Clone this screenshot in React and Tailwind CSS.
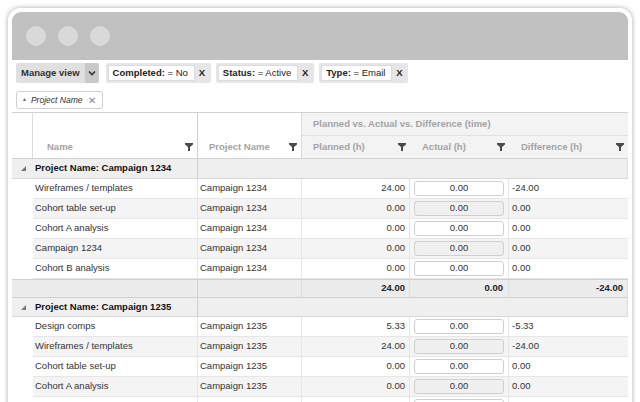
import React from "react";

const COLS = "grid grid-cols-[21px_165px_104px_108px_99px_119px]";

function Funnel() {
  return (
    <svg width="8" height="8" viewBox="0 0 8 8" className="shrink-0">
      <polygon points="0,0 8,0 8,1.6 5,4 5,8 3,8 3,4 0,1.6" fill="#4a4a4a" />
    </svg>
  );
}

function Toggle() {
  return (
    <svg width="5" height="5" viewBox="0 0 5 5">
      <polygon points="5,0 5,5 0,5" fill="#777" />
    </svg>
  );
}

function Chip({ label, value }) {
  return (
    <div className="flex h-[20px] rounded-[2px] bg-[#e6e6e6] p-[2px]">
      <div className="flex items-center border border-[#dcdcdc] bg-white pl-[4px] pr-[6px] text-[#222]">
        <span className="font-bold">{label}</span>
        <span>&nbsp;= {value}</span>
      </div>
      <div className="flex w-[14px] items-center justify-center font-bold text-[#222]">X</div>
    </div>
  );
}

const group1 = [
  ["Wireframes / templates", "Campaign 1234", "24.00", "-24.00"],
  ["Cohort table set-up", "Campaign 1234", "0.00", "0.00"],
  ["Cohort A analysis", "Campaign 1234", "0.00", "0.00"],
  ["Campaign 1234", "Campaign 1234", "0.00", "0.00"],
  ["Cohort B analysis", "Campaign 1234", "0.00", "0.00"],
];
const group2 = [
  ["Design comps", "Campaign 1235", "5.33", "-5.33"],
  ["Wireframes / templates", "Campaign 1235", "24.00", "-24.00"],
  ["Cohort table set-up", "Campaign 1235", "0.00", "0.00"],
  ["Cohort A analysis", "Campaign 1235", "0.00", "0.00"],
  ["Campaign 1235", "Campaign 1235", "0.00", "0.00"],
];

function DataRow({ row, i }) {
  const odd = i % 2 === 1;
  const bg = odd ? "bg-[#f4f4f4]" : "bg-white";
  const cell = `${bg} border-b border-[#e6e6e6] flex items-center`;
  return (
    <div className={`${COLS} h-[20px]`}>
      <div className="bg-white" />
      <div className={`${cell} border-r border-[#cfcfcf] pl-[2px]`}>{row[0]}</div>
      <div className={`${cell} border-r border-[#dcdcdc] pl-[2px]`}>{row[1]}</div>
      <div className={`${cell} border-r border-[#e4e4e4] justify-end pr-[4px]`}>{row[2]}</div>
      <div className={`${cell} border-r border-[#e4e4e4] px-[4px]`}>
        <div
          className={`flex h-[15px] w-full items-center justify-center rounded-[3px] border border-[#cfcfcf] ${
            odd ? "bg-[#f0f0f0]" : "bg-white"
          }`}
        >
          0.00
        </div>
      </div>
      <div className={`${cell} pl-[3px]`}>{row[3]}</div>
    </div>
  );
}

function GroupRow({ name, h }) {
  return (
    <div className={`${COLS} ${h} bg-[#efefef] border-b border-[#d8d8d8]`}>
      <div className="flex items-center justify-center pl-[1px]">
        <Toggle />
      </div>
      <div className="flex items-center border-r border-[#cfcfcf] pl-[2px] font-bold text-[#111]">
        Project Name: {name}
      </div>
      <div className="col-span-4" />
    </div>
  );
}

export default function App() {
  return (
    <div
      className="h-[402px] w-[640px] overflow-hidden bg-white px-2 pt-2 text-[9.5px] text-[#333]"
      style={{ fontFamily: '"Liberation Sans", Arial, Helvetica, sans-serif' }}
    >
      <div className="h-[420px] rounded-t-[12px] bg-white p-1 shadow-[0_0_5px_rgba(0,0,0,0.35)]">
        <div className="flex h-[48px] items-center gap-[12px] rounded-t-[9px] bg-[#c1c1c1] pl-[14px]">
          <div className="h-5 w-5 rounded-full bg-[#d9d9d9]" />
          <div className="h-5 w-5 rounded-full bg-[#d9d9d9]" />
          <div className="h-5 w-5 rounded-full bg-[#d9d9d9]" />
        </div>

        <div className="mt-[3px] flex gap-[5px] px-1">
          <div className="mr-[2px] flex h-[20px] overflow-hidden rounded-[2px] bg-[#e0e0e0]">
            <div className="flex items-center px-[5px] font-bold text-[#333]">Manage view</div>
            <div className="flex w-[14px] items-center justify-center bg-[#c9c9c9]">
              <svg width="8" height="6" viewBox="0 0 8 6">
                <polyline points="1,1.5 4,4.5 7,1.5" fill="none" stroke="#333" strokeWidth="1.6" />
              </svg>
            </div>
          </div>
          <Chip label="Completed:" value="No" />
          <Chip label="Status:" value="Active" />
          <Chip label="Type:" value="Email" />
        </div>

        <div className="mt-[8px] flex px-1">
          <div className="flex h-[18px] w-[87px] items-center gap-[4px] rounded-[3px] border border-[#cfcfcf] bg-white pl-[5px] text-[8.5px] italic text-[#333]">
            <span className="text-[5px] not-italic text-[#666]">▲</span>
            <span>Project Name</span>
            <span className="ml-[2px] text-[10px] not-italic text-[#888]">✕</span>
          </div>
        </div>

        <div className="mt-[3px] border-r border-[#dcdcdc]">
          <div className={`${COLS} grid-rows-[23px_22px] border-y border-[#d2d2d2] font-bold text-[#a3a3a3]`}>
            <div className="row-span-2 border-r border-[#dcdcdc] bg-white" />
            <div className="row-span-2 flex items-end border-r border-[#cfcfcf] bg-white">
              <div className="flex h-[22px] w-full items-center justify-between pl-[14px] pr-[4px]">
                <span>Name</span>
                <Funnel />
              </div>
            </div>
            <div className="row-span-2 flex items-end border-r border-[#dcdcdc] bg-white">
              <div className="flex h-[22px] w-full items-center justify-between pl-[11px] pr-[4px]">
                <span>Project Name</span>
                <Funnel />
              </div>
            </div>
            <div className="col-span-3 flex items-center border-b border-[#e0e0e0] bg-[#f3f3f3] pl-[11px]">
              Planned vs. Actual vs. Difference (time)
            </div>
            <div className="flex items-center justify-between bg-[#f3f3f3] pl-[11px] pr-[4px]">
              <span>Planned (h)</span>
              <Funnel />
            </div>
            <div className="flex items-center justify-between bg-[#f3f3f3] pl-[12px] pr-[4px]">
              <span>Actual (h)</span>
              <Funnel />
            </div>
            <div className="flex items-center justify-between bg-[#f3f3f3] pl-[12px] pr-[4px]">
              <span>Difference (h)</span>
              <Funnel />
            </div>
          </div>

          <GroupRow name="Campaign 1234" h="h-[20px]" />
          {group1.map((r, i) => (
            <DataRow key={i} row={r} i={i} />
          ))}
          <div className={`${COLS} h-[19px] border-y border-[#cfcfcf] bg-[#ececec] font-bold text-[#222]`}>
            <div className="col-span-2 border-r border-[#cfcfcf]" />
            <div className="border-r border-[#dcdcdc]" />
            <div className="flex items-center justify-end border-r border-[#e0e0e0] pr-[4px]">24.00</div>
            <div className="flex items-center justify-end border-r border-[#e0e0e0] pr-[5px]">0.00</div>
            <div className="flex items-center justify-end pr-[5px]">-24.00</div>
          </div>
          <GroupRow name="Campaign 1235" h="h-[19px]" />
          {group2.map((r, i) => (
            <DataRow key={i} row={r} i={i} />
          ))}
        </div>
      </div>
    </div>
  );
}
